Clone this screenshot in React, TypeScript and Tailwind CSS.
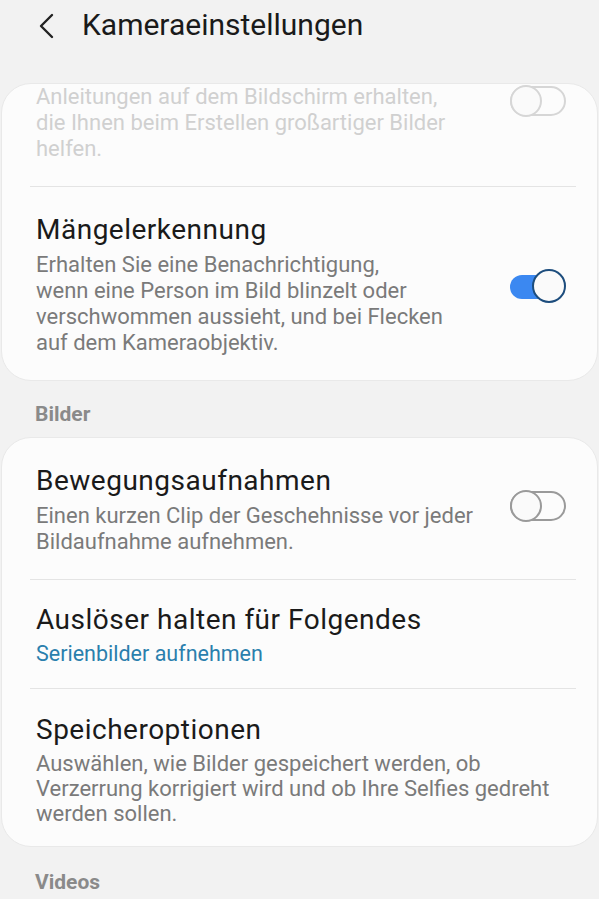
import React from 'react';

const Toggle = ({ on, faded }: { on?: boolean; faded?: boolean }) => {
  if (on) {
    return (
      <div className="relative w-[56px] h-[34px] shrink-0">
        <div className="absolute left-0 right-[2px] top-[6px] h-[24px] rounded-full bg-[#3b88f1]" />
        <div className="absolute right-0 top-0 w-[34px] h-[34px] rounded-full bg-[#fafafa] border-2 border-[#1d4d7d]" />
      </div>
    );
  }
  const c = faded ? 'border-[#d6d6d6]' : 'border-[#9a9a9a]';
  return (
    <div className="relative w-[56px] h-[32px] shrink-0">
      <div className={`absolute inset-x-0 top-[1px] h-[30px] rounded-full border-2 ${c}`} />
      <div className={`absolute left-0 top-0 w-[32px] h-[32px] rounded-full bg-[#fafafa] border-2 ${c}`} />
    </div>
  );
};

const Divider = () => <div className="ml-[28px] mr-[21px] h-px bg-[#e4e4e4]" />;

export default function App() {
  return (
    <div
      className="w-[599px] h-[899px] overflow-hidden bg-[#f2f2f2] text-[#1a1a1a]"
      style={{ fontFamily: 'Roboto, "Noto Sans", sans-serif' }}
    >
      {/* header */}
      <div className="h-[83px] flex items-start pt-[6px]">
        <svg className="ml-[36px] mt-[7px]" width="22" height="26" viewBox="0 0 22 26" fill="none">
          <path d="M16 2 L5 13 L16 24" stroke="#222" strokeWidth="2.4" strokeLinecap="round" strokeLinejoin="round" />
        </svg>
        <h1 className="ml-[24px] text-[30px] leading-[38px] font-normal">Kameraeinstellungen</h1>
      </div>

      {/* first card, scrolled under header */}
      <div className="mx-px rounded-[30px] bg-[#fcfcfc] border border-[#e9e9e9]">
        <div className="flex items-start justify-between pl-[34px] pr-[31px] pb-[24px]">
          <p className="text-[22px] leading-[26px] text-[#d0d0d0]">
            Anleitungen auf dem Bildschirm erhalten,
            <br />
            die Ihnen beim Erstellen großartiger Bilder
            <br />
            helfen.
          </p>
          <div className="mt-[1px]">
            <Toggle faded />
          </div>
        </div>
        <Divider />
        <div className="flex items-center justify-between pl-[34px] pr-[31px] pt-[27px] pb-[24px]">
          <div>
            <div className="text-[28px] leading-[32px] tracking-[0.5px]">Mängelerkennung</div>
            <p className="mt-[6px] text-[22px] leading-[26px] text-[#7a7a7a]">
              Erhalten Sie eine Benachrichtigung,
              <br />
              wenn eine Person im Bild blinzelt oder
              <br />
              verschwommen aussieht, und bei Flecken
              <br />
              auf dem Kameraobjektiv.
            </p>
          </div>
          <div className="mt-[2px]">
            <Toggle on />
          </div>
        </div>
      </div>

      <div className="pl-[35px] pt-[21px] pb-[11px] text-[21px] leading-[24px] font-bold text-[#8a8a8a]">Bilder</div>

      {/* second card */}
      <div className="mx-px rounded-[30px] bg-[#fcfcfc] border border-[#e9e9e9]">
        <div className="flex items-center justify-between pl-[34px] pr-[31px] pt-[27px] pb-[24px]">
          <div>
            <div className="text-[28px] leading-[32px] tracking-[0.5px]">Bewegungsaufnahmen</div>
            <p className="mt-[6px] text-[22px] leading-[26px] text-[#7a7a7a]">
              Einen kurzen Clip der Geschehnisse vor jeder
              <br />
              Bildaufnahme aufnehmen.
            </p>
          </div>
          <div className="mt-[-8px]">
            <Toggle />
          </div>
        </div>
        <Divider />
        <div className="pl-[34px] pr-[31px] pt-[24px] pb-[21px]">
          <div className="text-[28px] leading-[32px] tracking-[0.5px]">Auslöser halten für Folgendes</div>
          <div className="mt-[5px] text-[21.5px] leading-[26px] text-[#2a7fad]">Serienbilder aufnehmen</div>
        </div>
        <Divider />
        <div className="pl-[34px] pr-[31px] pt-[25px] pb-[20px]">
          <div className="text-[28px] leading-[32px] tracking-[0.5px]">Speicheroptionen</div>
          <p className="mt-[5px] text-[22px] leading-[25px] text-[#7a7a7a]">
            Auswählen, wie Bilder gespeichert werden, ob
            <br />
            Verzerrung korrigiert wird und ob Ihre Selfies gedreht
            <br />
            werden sollen.
          </p>
        </div>
      </div>

      <div className="pl-[35px] pt-[23px] text-[21px] leading-[24px] font-bold text-[#8a8a8a]">Videos</div>
    </div>
  );
}
